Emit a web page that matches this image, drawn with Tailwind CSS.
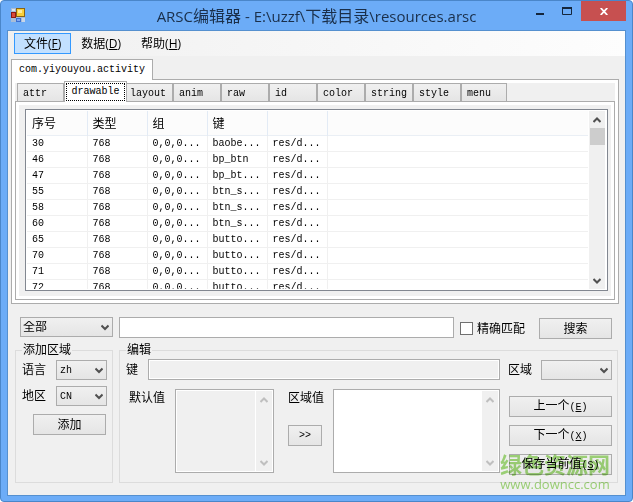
<!DOCTYPE html>
<html lang="zh-CN">

<head>
    <meta charset="UTF-8">
    <meta name="viewport" content="width=device-width, initial-scale=1.0">
    <title>ARSC编辑器</title>
    <script src="https://cdn.jsdelivr.net/npm/@tailwindcss/browser@4"></script>
</head>

<body class="bg-white">

    <!-- Window -->
    <div class="relative h-screen flex flex-col px-[6px] pb-[5px] rounded bg-[#6cacf7] border border-[#4a86c9] overflow-hidden font-['Liberation_Mono','Noto_Sans_CJK_SC',monospace] text-[12px] leading-[14px] text-black">

        <!-- Title bar -->
        <header class="relative h-[29px] shrink-0 flex items-center justify-center font-['Open_Sans','Noto_Sans_CJK_SC',sans-serif]">
            <svg class="absolute left-1 top-[7px] size-[14px]" viewBox="0 0 14 14">
                <rect width="14" height="14" fill="#a9bdd6" />
                <rect x="5" y="0" width="9" height="9" fill="#8a6414" />
                <rect x="6" y="1" width="7" height="7" fill="#f9cf3a" />
                <rect x="7" y="2" width="4" height="3" fill="#fdeb9a" />
                <rect x="0" y="4" width="5" height="6" fill="#8c1a14" />
                <rect x="1" y="5" width="3" height="4" fill="#d94a3a" />
                <rect x="5" y="10" width="5" height="4" fill="#3c6fd0" />
                <rect x="6" y="11" width="3" height="2" fill="#7fa8f2" />
                <rect x="11" y="10" width="3" height="4" fill="#c9d6e8" />
                <rect x="1" y="1" width="3" height="2" fill="#dbe5f1" />
            </svg>
            <h1 class="text-[15px] leading-[20px] text-[#1a2f4a] whitespace-pre">ARSC<span class="text-[16px]">编辑器</span> - E:\uzzf\<span class="text-[16px]">下载目录</span>\resources.arsc</h1>
            <div class="absolute right-0 top-0 flex">
                <button aria-label="最小化" class="w-[26px] h-[20px] flex items-center justify-center">
                    <svg class="w-[10px] h-[10px]" viewBox="0 0 10 10"><rect x="1" y="7" width="8" height="2" fill="#14263c" /></svg>
                </button>
                <button aria-label="最大化" class="w-[28px] h-[20px] flex items-center justify-center">
                    <svg class="w-[10px] h-[8px]" viewBox="0 0 10 8"><path d="M0.5 0V7.5H9.5V0" fill="none" stroke="#14263c" /><rect width="10" height="2" fill="#14263c" /></svg>
                </button>
                <button aria-label="关闭" class="w-[45px] h-[20px] bg-[#c75050] flex items-center justify-center">
                    <svg class="w-[8px] h-[7px]" viewBox="0 0 8 7"><path d="M0.7 0L7.3 7M7.3 0L0.7 7" stroke="#fff" stroke-width="1.8" /></svg>
                </button>
            </div>
        </header>

        <main class="flex-1 min-h-0 flex flex-col bg-[#f0f0f0] border border-[#5590cf]">

            <!-- Menu -->
            <nav class="h-[25px] shrink-0 flex items-center pl-[6px] bg-linear-to-r from-[#f0f0f0] to-[#fdfdfd] font-['Open_Sans','Noto_Sans_CJK_SC',sans-serif]">
                <button class="h-[21px] px-[9px] bg-[#c2e0ff] border border-[#3399ff]">文件(<u>F</u>)</button>
                <button class="h-[21px] px-[10px]">数据(<u>D</u>)</button>
                <button class="h-[21px] px-[10px]">帮助(<u>H</u>)</button>
            </nav>

            <!-- Package tab -->
            <div class="pl-[3px] pr-[6px] pt-[3px] flex-1 min-h-0 flex flex-col">
                <div role="tablist" class="flex h-[20px] shrink-0">
                    <button role="tab" aria-selected="true" class="relative z-10 -mb-px px-[7px] text-[10px] bg-white border border-b-0 border-[#acacac]">com.yiyouyou.activity</button>
                </div>
                <div class="flex-1 min-h-0 p-[3px] flex flex-col bg-white border border-[#acacac]">

                    <!-- Resource type tabs -->
                    <div role="tablist" class="h-[18px] shrink-0 flex bg-[#f0f0f0] pl-[2px] text-[10px]">
                        <button role="tab" class="w-[47px] pl-[5px] pt-[2px] text-left border border-b-0 border-[#acacac] bg-linear-to-b from-[#f0f0f0] to-[#e5e5e5]">attr</button>
                        <button role="tab" aria-selected="true" class="relative z-10 -mt-[2px] -mb-px w-[63px] p-px border border-b-0 border-[#acacac] bg-white"><span class="block h-full pt-px border border-dotted border-black">drawable</span></button>
                        <button role="tab" class="w-[46px] pl-[3px] pt-[2px] text-left border border-b-0 border-l-0 border-[#acacac] bg-linear-to-b from-[#f0f0f0] to-[#e5e5e5]">layout</button>
                        <button role="tab" class="w-[48px] pl-[5px] pt-[2px] text-left border border-b-0 border-[#acacac] bg-linear-to-b from-[#f0f0f0] to-[#e5e5e5]">anim</button>
                        <button role="tab" class="w-[48px] pl-[5px] pt-[2px] text-left border border-b-0 border-[#acacac] bg-linear-to-b from-[#f0f0f0] to-[#e5e5e5]">raw</button>
                        <button role="tab" class="w-[48px] pl-[5px] pt-[2px] text-left border border-b-0 border-[#acacac] bg-linear-to-b from-[#f0f0f0] to-[#e5e5e5]">id</button>
                        <button role="tab" class="w-[48px] pl-[5px] pt-[2px] text-left border border-b-0 border-[#acacac] bg-linear-to-b from-[#f0f0f0] to-[#e5e5e5]">color</button>
                        <button role="tab" class="w-[48px] pl-[5px] pt-[2px] text-left border border-b-0 border-[#acacac] bg-linear-to-b from-[#f0f0f0] to-[#e5e5e5]">string</button>
                        <button role="tab" class="w-[48px] pl-[5px] pt-[2px] text-left border border-b-0 border-[#acacac] bg-linear-to-b from-[#f0f0f0] to-[#e5e5e5]">style</button>
                        <button role="tab" class="w-[46px] pl-[5px] pt-[2px] text-left border border-b-0 border-[#acacac] bg-linear-to-b from-[#f0f0f0] to-[#e5e5e5]">menu</button>
                    </div>
                    <div class="flex-1 min-h-0 p-[3px] flex bg-white border border-[#acacac]">
                        <div class="flex-1 min-w-0 flex pl-[6px] pr-[3px] pt-[4px] pb-[5px] bg-[#f0f0f0]">

                            <!-- Resource list -->
                            <div class="flex-1 min-w-0 flex bg-white border border-[#828790] p-px">
                                <div class="flex-1 min-w-0 overflow-hidden">
                                    <table class="w-full table-fixed border-collapse">
                                        <thead>
                                            <tr class="h-[24px] bg-[#fcfcfc] border-b border-[#eaeff5]">
                                                <th class="w-[60px] pl-[5px] pt-[4px] text-left font-normal border-r border-[#e3ebf5]">序号</th>
                                                <th class="w-[60px] pl-[5px] pt-[4px] text-left font-normal border-r border-[#e3ebf5]">类型</th>
                                                <th class="w-[60px] pl-[5px] pt-[4px] text-left font-normal border-r border-[#e3ebf5]">组</th>
                                                <th class="w-[60px] pl-[5px] pt-[4px] text-left font-normal border-r border-[#e3ebf5]">键</th>
                                                <th class="w-[60px] border-r border-[#e3ebf5]"></th>
                                                <th></th>
                                            </tr>
                                        </thead>
                                        <tbody id="resource-list" class="text-[10px]"></tbody>
                                    </table>
                                </div>
                                <div class="ml-px mr-px w-[16px] flex flex-col items-center bg-[#f0f0f0]">
                                    <svg class="w-[8px] h-[17px] shrink-0" viewBox="0 0 8 17"><path d="M0.5 11L4 7.5L7.5 11" fill="none" stroke="#505050" stroke-width="2" /></svg>
                                    <div class="w-[15px] h-[17px] shrink-0 bg-[#cdcdcd]"></div>
                                    <svg class="w-[8px] h-[17px] shrink-0 mt-auto" viewBox="0 0 8 17"><path d="M0.5 7L4 10.5L7.5 7" fill="none" stroke="#505050" stroke-width="2" /></svg>
                                </div>
                            </div>
                        </div>
                    </div>
                </div>
            </div>

            <!-- Search -->
            <form class="mt-[13px] pl-3 pr-[13px] shrink-0 flex items-start">
                <div class="relative w-[93px]">
                    <select aria-label="范围" class="w-full h-[20px] pl-[2px] pt-[2px] appearance-none border border-[#acacac] bg-linear-to-b from-[#f0f0f0] to-[#e5e5e5]">
                        <option>全部</option>
                    </select>
                    <svg class="absolute right-[4px] top-[7px] w-[8px] h-[7px] pointer-events-none" viewBox="0 0 8 7"><path d="M0.5 1.5L4 5L7.5 1.5" fill="none" stroke="#505050" stroke-width="2" /></svg>
                </div>
                <input type="text" aria-label="搜索内容" class="ml-[6px] flex-1 min-w-0 h-[21px] px-1 bg-white border border-[#acacac]">
                <input type="checkbox" id="exact" class="ml-[6px] mt-[5px] size-[13px] appearance-none bg-white border border-[#707070]">
                <label for="exact" class="ml-1 mt-[6px]">精确匹配</label>
                <button type="button" class="ml-[14px] mt-px w-[73px] h-[21px] pt-[2px] border border-[#acacac] bg-linear-to-b from-[#f0f0f0] to-[#e5e5e5]">搜索</button>
            </form>

            <div class="mt-[3px] px-[7px] pb-[12px] shrink-0 flex gap-[6px]">

                <!-- Add locale -->
                <fieldset class="w-[98px] pl-[6px] pr-[5px] border border-[#dcdcdc]">
                    <legend class="px-px pt-[2px]">添加区域</legend>
                    <div class="mt-[2px] flex items-center">
                        <label for="lang" class="w-[34px] pt-px">语言</label>
                        <div class="relative flex-1">
                            <select id="lang" class="block w-full h-[20px] pl-[3px] pt-[2px] appearance-none text-[10px] border border-[#acacac] bg-linear-to-b from-[#f0f0f0] to-[#e5e5e5]">
                                <option>zh</option>
                            </select>
                            <svg class="absolute right-[4px] top-[7px] w-[8px] h-[7px] pointer-events-none" viewBox="0 0 8 7"><path d="M0.5 1.5L4 5L7.5 1.5" fill="none" stroke="#505050" stroke-width="2" /></svg>
                        </div>
                    </div>
                    <div class="mt-[6px] flex items-center">
                        <label for="country" class="w-[34px] pt-px">地区</label>
                        <div class="relative flex-1">
                            <select id="country" class="block w-full h-[20px] pl-[3px] pt-[2px] appearance-none text-[10px] border border-[#acacac] bg-linear-to-b from-[#f0f0f0] to-[#e5e5e5]">
                                <option>CN</option>
                            </select>
                            <svg class="absolute right-[4px] top-[7px] w-[8px] h-[7px] pointer-events-none" viewBox="0 0 8 7"><path d="M0.5 1.5L4 5L7.5 1.5" fill="none" stroke="#505050" stroke-width="2" /></svg>
                        </div>
                    </div>
                    <button class="mt-2 ml-[11px] w-[73px] h-[21px] pt-[2px] border border-[#acacac] bg-linear-to-b from-[#f0f0f0] to-[#e5e5e5]">添加</button>
                </fieldset>

                <!-- Edit value -->
                <fieldset class="flex-1 min-w-0 pl-[6px] pr-[5px] pb-[7px] border border-[#dcdcdc]">
                    <legend class="px-px pt-[2px]">编辑</legend>
                    <div class="mt-px flex items-center">
                        <label for="key" class="w-[22px] pt-[2px]">键</label>
                        <input type="text" id="key" readonly class="flex-1 min-w-0 h-[21px] px-1 bg-[#f0f0f0] border border-[#acacac] shadow-[inset_0_0_0_1px_white]">
                        <label for="locale" class="ml-2 w-[33px] pt-[2px]">区域</label>
                        <div class="relative w-[71px]">
                            <select id="locale" class="block w-full h-[20px] appearance-none border border-[#acacac] bg-linear-to-b from-[#f0f0f0] to-[#e5e5e5]">
                                <option></option>
                            </select>
                            <svg class="absolute right-[4px] top-[7px] w-[8px] h-[7px] pointer-events-none" viewBox="0 0 8 7"><path d="M0.5 1.5L4 5L7.5 1.5" fill="none" stroke="#505050" stroke-width="2" /></svg>
                        </div>
                    </div>
                    <div class="mt-[9px] flex items-start">
                        <label for="default-value" class="w-[49px] pl-[3px] pt-[3px]">默认值</label>
                        <div class="w-[99px] h-[84px] p-px flex bg-white border border-[#acacac]">
                            <textarea id="default-value" readonly class="flex-1 min-w-0 h-full resize-none bg-[#f0f0f0]"></textarea>
                            <div class="ml-px w-[16px] flex flex-col items-center justify-between bg-[#f0f0f0]">
                                <svg class="w-[8px] h-[17px]" viewBox="0 0 8 17"><path d="M0.5 11L4 7.5L7.5 11" fill="none" stroke="#bfbfbf" stroke-width="2" /></svg>
                                <svg class="w-[8px] h-[17px]" viewBox="0 0 8 17"><path d="M0.5 7L4 10.5L7.5 7" fill="none" stroke="#bfbfbf" stroke-width="2" /></svg>
                            </div>
                        </div>
                        <div class="ml-[14px] w-[45px] flex flex-col items-start">
                            <label for="locale-value" class="pt-[3px]">区域值</label>
                            <button class="mt-[19px] w-[34px] h-[21px] text-[10px] border border-[#acacac] bg-linear-to-b from-[#f0f0f0] to-[#e5e5e5]">&gt;&gt;</button>
                        </div>
                        <div class="flex-1 min-w-0 h-[84px] p-px flex bg-white border border-[#acacac]">
                            <textarea id="locale-value" class="flex-1 min-w-0 h-full resize-none bg-white"></textarea>
                            <div class="w-[16px] flex flex-col items-center justify-between bg-[#f0f0f0]">
                                <svg class="w-[8px] h-[17px]" viewBox="0 0 8 17"><path d="M0.5 11L4 7.5L7.5 11" fill="none" stroke="#bfbfbf" stroke-width="2" /></svg>
                                <svg class="w-[8px] h-[17px]" viewBox="0 0 8 17"><path d="M0.5 7L4 10.5L7.5 7" fill="none" stroke="#bfbfbf" stroke-width="2" /></svg>
                            </div>
                        </div>
                        <div class="ml-[9px] mt-[7px] w-[103px] flex flex-col gap-2">
                            <button class="h-[21px] pt-[2px] border border-[#acacac] bg-linear-to-b from-[#f0f0f0] to-[#e5e5e5]">上一个<span class="text-[10px]">(<u>E</u>)</span></button>
                            <button class="h-[21px] pt-[2px] border border-[#acacac] bg-linear-to-b from-[#f0f0f0] to-[#e5e5e5]">下一个<span class="text-[10px]">(<u>X</u>)</span></button>
                            <button class="h-[21px] pt-[2px] border border-[#acacac] bg-linear-to-b from-[#f0f0f0] to-[#e5e5e5]">保存当前值<span class="text-[10px]">(<u>S</u>)</span></button>
                        </div>
                    </div>
                </fieldset>
            </div>
        </main>

        <!-- Watermark -->
        <div class="absolute right-[22px] bottom-[9px] flex flex-col items-center pointer-events-none mix-blend-multiply text-[#a4dc7c] font-['Open_Sans','Noto_Sans_CJK_SC',sans-serif]">
            <span class="text-[22px] leading-[24px] font-bold">绿色资源网</span>
            <span class="text-[13px] leading-[16px]">www.downcc.com</span>
        </div>
    </div>

    <script>
        const resources = [
            { id: '30', key: 'baobe...' },
            { id: '46', key: 'bp_btn' },
            { id: '47', key: 'bp_bt...' },
            { id: '55', key: 'btn_s...' },
            { id: '58', key: 'btn_s...' },
            { id: '60', key: 'btn_s...' },
            { id: '65', key: 'butto...' },
            { id: '70', key: 'butto...' },
            { id: '71', key: 'butto...' },
            { id: '72', key: 'butto...' },
        ];

        // Fill the resource list
        const list = document.getElementById('resource-list');
        resources.forEach(item => {
            const row = document.createElement('tr');
            row.className = 'h-[16px] border-b border-[#f0f0f0]';
            row.innerHTML = `
                <td class="pl-[5px] pt-px border-r border-[#f0f0f0]">${item.id}</td>
                <td class="pl-[5px] pt-px border-r border-[#f0f0f0]">768</td>
                <td class="pl-[5px] pt-px border-r border-[#f0f0f0]">0,0,0...</td>
                <td class="pl-[5px] pt-px border-r border-[#f0f0f0]">${item.key}</td>
                <td class="pl-[5px] pt-px border-r border-[#f0f0f0]">res/d...</td>
                <td></td>
            `;
            list.appendChild(row);
        });
    </script>

</body>

</html>
